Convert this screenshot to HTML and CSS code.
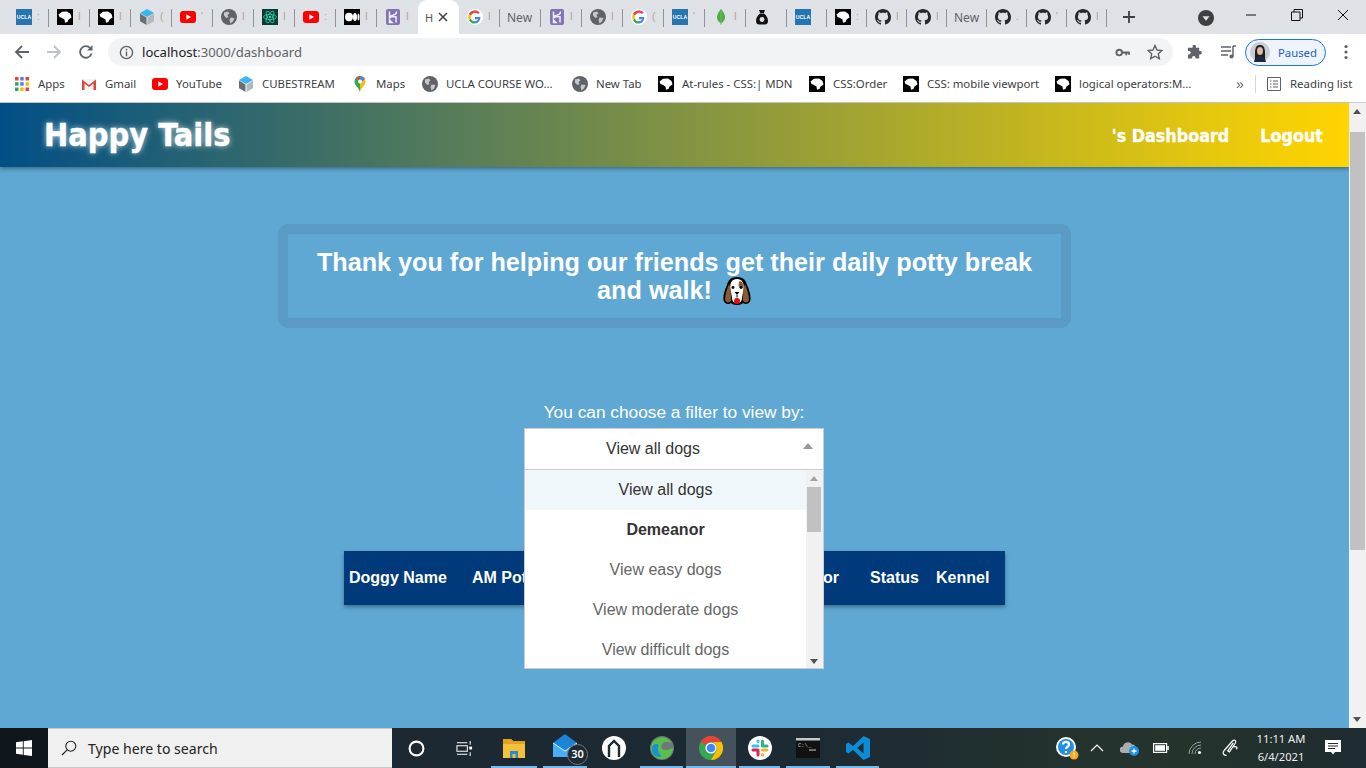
FILE: index.html
```html
<!DOCTYPE html>
<html lang="en">
<head>
<meta charset="utf-8">
<title>Happy Tails</title>
<link rel="stylesheet" href="styles.css">
</head>
<body>
<svg class="defs" aria-hidden="true">
  <symbol id="ucla" viewBox="0 0 16 16"><rect width="16" height="16" fill="#2774ae"/><text x="8" y="10" font-size="5.2" font-weight="700" fill="#fff" text-anchor="middle" font-family="Liberation Sans">UCLA</text></symbol>
  <symbol id="wolf" viewBox="0 0 16 16"><rect width="16" height="16" fill="#000"/><path d="M1.5 5.5 5 2.8 10 2.5 13.5 5 14.5 8.5 11.5 10.5 10.5 13 8 13.8 7.5 10.5 4.5 8.8 2.5 8Z" fill="#fff"/></symbol>
  <symbol id="cube" viewBox="0 0 16 16"><path d="M8 0 15 4 8 8 1 4Z" fill="#38b6f1"/><path d="M1 4.6 7.5 8.4V16L1 12.2Z" fill="#6b6f73"/><path d="M15 4.6 8.5 8.4V16L15 12.2Z" fill="#b5b9bd"/></symbol>
  <symbol id="yt" viewBox="0 0 16 16"><rect y="2" width="16" height="12" rx="3" fill="#f00"/><path d="M6.3 5.2 11 8 6.3 10.8Z" fill="#fff"/></symbol>
  <symbol id="globe" viewBox="0 0 16 16"><circle cx="8" cy="8" r="8" fill="#5f6368"/><path d="M3 3.5 7 2.5 8.5 4.5 6.5 6 7.5 8 5.5 9 3 6.5ZM9.5 8.5 13.5 9 12 12.5 9.5 14.5 8.5 11Z" fill="#c5c8cc"/></symbol>
  <symbol id="react" viewBox="0 0 16 16"><rect width="16" height="16" fill="#0b3b33"/><g fill="none" stroke="#2fd0a8" stroke-width=".8"><ellipse cx="8" cy="8" rx="6.5" ry="2.6"/><ellipse cx="8" cy="8" rx="6.5" ry="2.6" transform="rotate(60 8 8)"/><ellipse cx="8" cy="8" rx="6.5" ry="2.6" transform="rotate(120 8 8)"/></g><circle cx="8" cy="8" r="1.3" fill="#2fd0a8"/></symbol>
  <symbol id="medium" viewBox="0 0 16 16"><rect width="16" height="16" fill="#000"/><ellipse cx="5" cy="8" rx="4" ry="4.2" fill="#fff"/><ellipse cx="11" cy="8" rx="2" ry="4" fill="#fff"/><ellipse cx="14.5" cy="8" rx="1" ry="3.6" fill="#fff"/></symbol>
  <symbol id="heroku" viewBox="0 0 16 16"><rect x="1" width="14" height="16" rx="2" fill="#8473b3"/><path d="M4.5 2.5V9L7 7.5 11 7.7V13.5M11.5 2.5C11.5 5 10 5.8 8 6.2L4.5 7.5M4.5 11 7 13.5 4.5 13.5Z" fill="none" stroke="#f1edf8" stroke-width="1.5"/></symbol>
  <symbol id="google" viewBox="0 0 16 16"><circle cx="8" cy="8" r="8" fill="#fff"/><path d="M13.4 8H8v2.2h3.1a3.3 3.3 0 0 1-3.1 2.1V14.6A6.2 6.2 0 0 0 13.4 8Z" fill="#4285f4"/><path d="M8 12.3A4.3 4.3 0 0 1 3.9 9.4L1.9 11A6.6 6.6 0 0 0 8 14.6Z" fill="#34a853"/><path d="M3.9 9.4a4.3 4.3 0 0 1 0-2.8L1.9 5a6.6 6.6 0 0 0 0 6Z" fill="#fbbc05"/><path d="M3.9 6.6A4.3 4.3 0 0 1 11 5.1L12.7 3.5A6.6 6.6 0 0 0 1.9 5Z" fill="#ea4335"/></symbol>
  <symbol id="mongo" viewBox="0 0 16 16"><path d="M8 0C11 3.5 12 6 12 8.5 12 11.500 9.800 13 8.500 14L8.200 16H7.800L7.500 14C6.200 13 4 11.500 4 8.500 4 6 5 3.500 8 0Z" fill="#4faa41"/><path d="M8 2V15" stroke="#a3c89a" stroke-width=".5"/></symbol>
  <symbol id="bag" viewBox="0 0 16 16"><path d="M5 1H11L9.800 4H6.200ZM6 4.500H10C12.500 6.500 14 9 14 12 14 14.500 12.500 15.500 11 15.500H5C3.500 15.500 2 14.500 2 12 2 9 3.500 6.500 6 4.500Z" fill="#111"/><circle cx="8" cy="10.500" r="2.400" fill="#dee1e6"/></symbol>
  <symbol id="github" viewBox="0 0 16 16"><path d="M8 0C3.58 0 0 3.58 0 8c0 3.54 2.29 6.53 5.47 7.59.4.07.55-.17.55-.38 0-.19-.01-.82-.01-1.49-2.01.37-2.53-.49-2.69-.94-.09-.23-.48-.94-.82-1.13-.28-.15-.68-.52-.01-.53.63-.01 1.08.58 1.23.82.72 1.21 1.87.87 2.33.66.07-.52.28-.87.51-1.07-1.78-.2-3.64-.89-3.64-3.95 0-.87.31-1.59.82-2.15-.08-.2-.36-1.02.08-2.12 0 0 .67-.21 2.2.82.64-.18 1.32-.27 2-.27.68 0 1.36.09 2 .27 1.53-1.04 2.2-.82 2.2-.82.44 1.1.16 1.92.08 2.12.51.56.82 1.27.82 2.15 0 3.07-1.87 3.75-3.65 3.95.29.25.54.73.54 1.48 0 1.07-.01 1.93-.01 2.2 0 .21.15.46.55.38A8.013 8.013 0 0016 8c0-4.42-3.58-8-8-8z" fill="#24292e"/></symbol>
  <symbol id="apps" viewBox="0 0 16 16"><g><rect x="1" y="1" width="3.500" height="3.500" fill="#ea4335"/><rect x="6.200" y="1" width="3.500" height="3.500" fill="#4285f4"/><rect x="11.500" y="1" width="3.500" height="3.500" fill="#ea4335"/><rect x="1" y="6.200" width="3.500" height="3.500" fill="#34a853"/><rect x="6.200" y="6.200" width="3.500" height="3.500" fill="#4285f4"/><rect x="11.500" y="6.200" width="3.500" height="3.500" fill="#fbbc05"/><rect x="1" y="11.500" width="3.500" height="3.500" fill="#34a853"/><rect x="6.200" y="11.500" width="3.500" height="3.500" fill="#fbbc05"/><rect x="11.500" y="11.500" width="3.500" height="3.500" fill="#ea4335"/></g></symbol>
  <symbol id="gmail" viewBox="0 0 16 16"><path d="M1 3H15V14H1Z" fill="#f4f4f4"/><path d="M1 3.500 8 9 15 3.500V14H12.500V7.500L8 11 3.500 7.500V14H1Z" fill="#d8493c"/></symbol>
  <symbol id="maps" viewBox="0 0 16 16"><path d="M8 0A5.500 5.500 0 0 0 2.500 5.500C2.500 9.500 6.500 11 8 16Z" fill="#34a853"/><path d="M8 0A5.500 5.500 0 0 1 13.500 5.500C13.500 9.500 9.500 11 8 16Z" fill="#fbbc05"/><path d="M3.500 2.500A5.500 5.500 0 0 1 8 0V4Z" fill="#ea4335"/><path d="M8 0A5.500 5.500 0 0 1 13 3L8 7Z" fill="#4285f4"/><circle cx="8" cy="5.500" r="2" fill="#fff"/></symbol>
</svg>

<div class="tabstrip">
  <div class="tabs">
    <div class="tab"><svg class="fav"><use href="#ucla"/></svg><span class="frag">:</span></div>
    <div class="tab"><svg class="fav"><use href="#wolf"/></svg><span class="frag frag-r">I</span></div>
    <div class="tab"><svg class="fav"><use href="#wolf"/></svg><span class="frag frag-r">I</span></div>
    <div class="tab"><svg class="fav"><use href="#cube"/></svg><span class="frag">(</span></div>
    <div class="tab"><svg class="fav"><use href="#yt"/></svg><span class="frag frag-r">'</span></div>
    <div class="tab"><svg class="fav"><use href="#globe"/></svg><span class="frag frag-r">I</span></div>
    <div class="tab"><svg class="fav"><use href="#react"/></svg><span class="frag frag-r">I</span></div>
    <div class="tab"><svg class="fav"><use href="#yt"/></svg><span class="frag">:</span></div>
    <div class="tab"><svg class="fav"><use href="#medium"/></svg><span class="frag frag-r">I</span></div>
    <div class="tab tab-before"><svg class="fav"><use href="#heroku"/></svg><span class="frag frag-r">I</span></div>
    <div class="tab tab-active"><span class="active-title">H</span><svg class="tab-close" viewBox="0 0 10 10"><path d="M1 1 9 9M9 1 1 9" stroke="#3c4043" stroke-width="1.500"/></svg></div>
    <div class="tab"><svg class="fav"><use href="#google"/></svg><span class="frag">I</span></div>
    <div class="tab"><span class="tab-new">New</span></div>
    <div class="tab"><svg class="fav"><use href="#heroku"/></svg><span class="frag frag-r">I</span></div>
    <div class="tab"><svg class="fav"><use href="#globe"/></svg><span class="frag frag-r">I</span></div>
    <div class="tab"><svg class="fav"><use href="#google"/></svg><span class="frag">(</span></div>
    <div class="tab"><svg class="fav"><use href="#ucla"/></svg><span class="frag frag-r">'</span></div>
    <div class="tab"><svg class="fav"><use href="#mongo"/></svg><span class="frag frag-r">I</span></div>
    <div class="tab"><svg class="fav"><use href="#bag"/></svg></div>
    <div class="tab tab-n"><svg class="fav"><use href="#ucla"/></svg></div>
    <div class="tab tab-n"><svg class="fav"><use href="#wolf"/></svg><span class="frag">:</span></div>
    <div class="tab tab-n"><svg class="fav"><use href="#github"/></svg><span class="frag">I</span></div>
    <div class="tab tab-n"><svg class="fav"><use href="#github"/></svg><span class="frag">I</span></div>
    <div class="tab tab-n"><span class="tab-new">New</span></div>
    <div class="tab tab-n"><svg class="fav"><use href="#github"/></svg><span class="frag">.</span></div>
    <div class="tab tab-n"><svg class="fav"><use href="#github"/></svg><span class="frag frag-r">'</span></div>
    <div class="tab tab-n"><svg class="fav"><use href="#github"/></svg><span class="frag">I</span></div>
  </div>
  <svg class="newtab" viewBox="0 0 12 12"><path d="M6 0V12M0 6H12" stroke="#3c4043" stroke-width="1.800"/></svg>
  <svg class="tabsearch" viewBox="0 0 18 18"><circle cx="9" cy="9" r="9" fill="#3c4043"/><path d="M5 7H13L9 12Z" fill="#dee1e6"/></svg>
  <div class="winctl">
    <svg viewBox="0 0 12 12"><path d="M1 6H11" stroke="#111" stroke-width="1"/></svg>
    <svg viewBox="0 0 12 12"><path d="M3 3V.5H11.500V9H9M.5 3H9V11.500H.5Z" fill="none" stroke="#111" stroke-width="1"/></svg>
    <svg viewBox="0 0 12 12"><path d="M1 1 11 11M11 1 1 11" stroke="#111" stroke-width="1"/></svg>
  </div>
</div>

<div class="toolbar">
  <svg class="tb-ic" viewBox="0 0 16 16"><path d="M15 8H2M8 2 2 8 8 14" fill="none" stroke="#5f6368" stroke-width="1.800"/></svg>
  <svg class="tb-ic" viewBox="0 0 16 16"><path d="M1 8H14M8 2 14 8 8 14" fill="none" stroke="#bdc1c6" stroke-width="1.800"/></svg>
  <svg class="tb-ic" viewBox="0 0 16 16"><path d="M13.500 9.500A5.800 5.800 0 1 1 12.200 4" fill="none" stroke="#5f6368" stroke-width="1.800"/><path d="M14.500 1V6.500H9Z" fill="#5f6368"/></svg>
  <div class="omnibox">
    <svg class="omni-info" viewBox="0 0 16 16"><circle cx="8" cy="8" r="6.500" fill="none" stroke="#5f6368" stroke-width="1.500"/><path d="M8 7V12M8 4V5.800" stroke="#5f6368" stroke-width="1.500"/></svg>
    <span class="url"><span class="url-host">localhost</span>:3000/dashboard</span>
    <svg class="omni-key" viewBox="0 0 16 16"><circle cx="4.500" cy="8" r="3" fill="none" stroke="#5f6368" stroke-width="2"/><path d="M7 8H15.500M12 8V11M15 8V10.500" stroke="#5f6368" stroke-width="2"/></svg>
    <svg class="omni-star" viewBox="0 0 16 16"><path d="M8 1.500 10 6 15 6.500 11.300 9.800 12.300 14.700 8 12.200 3.700 14.700 4.700 9.800 1 6.500 6 6Z" fill="none" stroke="#5f6368" stroke-width="1.400"/></svg>
  </div>
  <svg class="tb-puzzle" viewBox="0 0 16 16"><path d="M6 1.500A1.700 1.700 0 0 1 9.500 1.500V3H13V6.500H14.500A1.800 1.800 0 0 1 14.500 10H13V14.500H9V13A1.800 1.800 0 0 0 5.500 13V14.500H1V10H2.500A1.800 1.800 0 0 0 2.500 6.500H1V3H6Z" fill="#5f6368"/></svg>
  <svg class="tb-media" viewBox="0 0 16 16"><path d="M0 3H10M0 7H10M0 11H7" stroke="#5f6368" stroke-width="1.300"/><path d="M12 2V12.500" stroke="#5f6368" stroke-width="1.500"/><path d="M12 2H15" stroke="#5f6368" stroke-width="1.500"/><circle cx="10.500" cy="12.500" r="2" fill="#5f6368"/></svg>
  <div class="profile">
    <svg class="avatar" viewBox="0 0 20 20"><circle cx="10" cy="10" r="10" fill="#c9ccd1"/><path d="M5 20C5 10 4 3 10 3 16 3 15 10 15 20Z" fill="#1f1d24"/><ellipse cx="10" cy="9" rx="3" ry="4" fill="#e0b9a2"/><path d="M4 20C5 15 8 14 10 14 12 14 15 15 16 20Z" fill="#1e2a3c"/></svg>
    <span class="profile-text">Paused</span>
  </div>
  <svg class="tb-dots" viewBox="0 0 4 16"><circle cx="2" cy="2.500" r="1.600" fill="#5f6368"/><circle cx="2" cy="8" r="1.600" fill="#5f6368"/><circle cx="2" cy="13.500" r="1.600" fill="#5f6368"/></svg>
</div>

<div class="bookmarks">
  <div class="bm-list">
    <a class="bm"><svg class="fav"><use href="#apps"/></svg>Apps</a>
    <a class="bm"><svg class="fav"><use href="#gmail"/></svg>Gmail</a>
    <a class="bm"><svg class="fav"><use href="#yt"/></svg>YouTube</a>
    <a class="bm"><svg class="fav"><use href="#cube"/></svg>CUBESTREAM</a>
    <a class="bm"><svg class="fav"><use href="#maps"/></svg>Maps</a>
    <a class="bm"><svg class="fav"><use href="#globe"/></svg>UCLA COURSE WO...</a>
    <a class="bm"><svg class="fav"><use href="#globe"/></svg>New Tab</a>
    <a class="bm"><svg class="fav"><use href="#wolf"/></svg>At-rules - CSS:| MDN</a>
    <a class="bm"><svg class="fav"><use href="#wolf"/></svg>CSS:Order</a>
    <a class="bm"><svg class="fav"><use href="#wolf"/></svg>CSS: mobile viewport</a>
    <a class="bm"><svg class="fav"><use href="#wolf"/></svg>logical operators:M...</a>
  </div>
  <span class="bm-more">»</span>
  <span class="bm-sep"></span>
  <a class="bm bm-read"><svg class="fav-read" viewBox="0 0 14 14"><path d="M.5.5H13.500V13.500H.5ZM3 4H4.500M6 4H11M3 7H4.500M6 7H11M3 10H4.500M6 10H11" fill="none" stroke="#5f6368" stroke-width="1"/></svg>Reading list</a>
</div>

<div class="viewport">
  <div class="page">
    <header class="hero">
      <h1 class="brand">Happy Tails</h1>
      <nav class="nav">
        <a class="nav-link">'s Dashboard</a>
        <a class="nav-link">Logout</a>
      </nav>
    </header>
    <section class="thanks">
      <h2 class="thanks-text">Thank you for helping our friends get their daily potty break and walk!
        <svg class="dog" viewBox="0 0 30 30"><path d="M15 1C8 1 6 5 5 9 3 13 1 19 1.500 24 2 28 7 29 9 27 10 28 12 29 15 29 18 29 20 28 21 27 23 29 28 28 28.500 24 29 19 27 13 25 9 24 5 22 1 15 1Z" fill="#000"/><path d="M7 8C5 13 3 19 3 24 4 27 7 27 9 25 9 18 9 12 7 8ZM23 8C25 13 27 19 27 24 26 27 23 27 21 25 21 18 21 12 23 8Z" fill="#8a5a33"/><path d="M15 3C10 3 7.500 7 8.500 13L10 22C10 25 12 27 15 27 18 27 20 25 20 22L21.500 13C22.500 7 20 3 15 3Z" fill="#fff"/><path d="M17 5.500C20 4.500 22 8 21 12 19.500 13 17 12 16.500 9.500Z" fill="#8a5a33"/><circle cx="11" cy="11.500" r="1.400" fill="#000"/><circle cx="19" cy="11.500" r="1.400" fill="#000"/><path d="M12.500 16H17.500L15 19Z" fill="#000"/><path d="M15 19V21.500" stroke="#000" stroke-width="1"/><circle cx="15" cy="25" r="3" fill="#e01010"/></svg>
      </h2>
    </section>
    <section class="filter">
      <label class="filter-label">You can choose a filter to view by:</label>
      <div class="select">
        <div class="select-value"><span class="select-text">View all dogs</span><span class="caret"></span></div>
        <div class="menu">
          <ul class="menu-list">
            <li class="opt opt-sel">View all dogs</li>
            <li class="opt opt-group">Demeanor</li>
            <li class="opt">View easy dogs</li>
            <li class="opt">View moderate dogs</li>
            <li class="opt">View difficult dogs</li>
          </ul>
          <div class="menu-scroll">
            <span class="arrow-up"></span>
            <span class="menu-thumb"></span>
            <span class="arrow-down"></span>
          </div>
        </div>
      </div>
    </section>
    <div class="table-wrap">
      <table class="dogs">
        <thead><tr>
          <th class="c-name">Doggy Name</th><th class="c-am">AM Potty</th><th class="c-pm">PM Potty</th><th class="c-walk">Walk</th><th class="c-beh">Behavior</th><th class="c-status">Status</th><th class="c-kennel">Kennel</th>
        </tr></thead>
      </table>
    </div>
  </div>
  <div class="scrollbar">
    <span class="arrow-up arrow-dark"></span>
    <span class="thumb"></span>
    <span class="arrow-down arrow-dark"></span>
  </div>
</div>

<footer class="taskbar">
  <div class="start"><svg viewBox="0 0 16 16" class="win"><path d="M0 2.300 6.800 1.300V7.600H0ZM7.700 1.200 16 0V7.600H7.700ZM0 8.500H6.800V14.800L0 13.800ZM7.700 8.500H16V16L7.700 14.900Z" fill="#fff"/></svg></div>
  <div class="search"><svg class="search-ic" viewBox="0 0 16 16"><circle cx="9.800" cy="6.200" r="5" fill="none" stroke="#222" stroke-width="1.100"/><path d="M6.200 9.800 1 15" stroke="#222" stroke-width="1.200"/></svg><span>Type here to search</span></div>
  <div class="apps">
    <div class="app"><svg class="ic-cortana" viewBox="0 0 16 16"><circle cx="8" cy="8" r="6.500" fill="none" stroke="#fff" stroke-width="2"/></svg></div>
    <div class="app"><svg class="ic-task" viewBox="0 0 18 18"><path d="M1 3H12M1 15H12M1 6H12V12H1ZM15 1V5M15 13V17" fill="none" stroke="#fff" stroke-width="1.100"/><rect x="14" y="7" width="3" height="3" fill="#fff"/></svg></div>
    <div class="app app-run"><svg class="ic-app" viewBox="0 0 24 24"><path d="M1 3H9L11 5H23V22H1Z" fill="#f3c13a"/><path d="M1 3H9L11 5H23V8H1Z" fill="#e3a21a"/><path d="M8 22V15H16V22H13.500V18H10.500V22Z" fill="#2a8ad4"/></svg></div>
    <div class="app app-run"><svg class="ic-mail" viewBox="0 0 24 24"><path d="M0 9 12 0 24 9V23H0Z" fill="#1b86d8"/><path d="M0 9 12 17 24 9V23H0Z" fill="#48aef5"/><path d="M0 9 12 17 24 9" fill="none" stroke="#d9effd" stroke-width="1"/></svg><span class="mail-badge">30</span></div>
    <div class="app"><svg class="ic-app" viewBox="0 0 24 24"><circle cx="12" cy="12" r="12" fill="#fff"/><path d="M7 21V10L12 5 17 10V21" fill="none" stroke="#1d2a33" stroke-width="2.400"/></svg></div>
    <div class="app app-run app-split"><svg class="ic-app" viewBox="0 0 24 24"><circle cx="12" cy="12" r="12" fill="#6d7b78"/><path d="M1 12A11 11 0 0 1 22 8C20 5 14 5 12 8 10 11 12 14 15 14 19 14 22 13 23 11 23 18 18 23 12 23 5 23 1 18 1 12Z" fill="#5bc04a"/><path d="M2 13C2 8 7 7 9 9 7 12 8 18 12 20 9 22 2 21 2 13Z" fill="#1b8fd1"/></svg></div>
    <div class="app app-run app-chrome"><svg class="ic-chrome" viewBox="0 0 24 24"><circle cx="12" cy="12" r="12" fill="#34a853"/><path d="M12 0A12 12 0 0 1 22.400 6H12A6 6 0 0 0 6.800 9L1.600 6A12 12 0 0 1 12 0Z" fill="#ea4335"/><path d="M22.400 6A12 12 0 0 1 12 24L17.200 15A6 6 0 0 0 12 6Z" fill="#fbbc05"/><path d="M1.600 6 6.800 15A6 6 0 0 0 12 18L6 21" fill="#34a853"/><circle cx="12" cy="12" r="5.600" fill="#fff"/><circle cx="12" cy="12" r="4.300" fill="#4285f4"/></svg></div>
    <div class="app app-run"><svg class="ic-app" viewBox="0 0 24 24"><circle cx="12" cy="12" r="12" fill="#fff"/><g stroke-width="3" stroke-linecap="round"><path d="M10 5V5.500M10 10H5" stroke="#36c5f0"/><path d="M19 10H14.500M14.500 10V5" stroke="#2eb67d"/><path d="M14.500 14H19M14.500 19V18.500" stroke="#ecb22e"/><path d="M5 14H10M10 14V19" stroke="#e01e5a"/></g></svg></div>
    <div class="app app-run app-split"><svg class="ic-cmd" viewBox="0 0 24 20"><rect width="24" height="20" fill="#111"/><rect width="24" height="2.500" fill="#c5c9cc"/><text x="2" y="9" font-size="5.500" fill="#ccc" font-family="Liberation Mono">C:\_</text><path d="M13 12H20" stroke="#ccc" stroke-width="1"/></svg></div>
    <div class="app app-run app-split"><svg class="ic-app" viewBox="0 0 24 24"><path d="M17.500 0 24 3V21L17.500 24 7 14 2.500 17.500 0 16V8L2.500 6.500 7 10ZM17.500 6.500 11.300 12 17.500 17.500Z" fill="#0e8bd6"/></svg></div>
  </div>
  <div class="tray">
    <div class="tr"><svg class="ic-help" viewBox="0 0 24 24"><circle cx="11" cy="11" r="10" fill="#fff"/><circle cx="11" cy="11" r="8" fill="#1f8fe0"/><path d="M8 8.500C8 5 14 5 14 8.500 14 11 11 10.500 11 13M11 15V17" fill="none" stroke="#fff" stroke-width="2.200"/><circle cx="19" cy="19" r="4.500" fill="#f5a81c"/><path d="M19 16.500V19.500M19 20.500V21.500" stroke="#fff" stroke-width="1.200"/></svg></div>
    <div class="tr"><svg class="ic-small" viewBox="0 0 14 14"><path d="M1 10 7 4 13 10" fill="none" stroke="#fff" stroke-width="1.200"/></svg></div>
    <div class="tr"><svg class="ic-cloud" viewBox="0 0 20 16"><path d="M3 13A3 3 0 0 1 3 6.500 5 5 0 0 1 12 4.500 4 4 0 0 1 16 9V13Z" fill="#a9adb0"/><circle cx="14" cy="11" r="5" fill="#1e8fe6"/><path d="M11.500 11H16.500M14 8.500V13.500" stroke="#fff" stroke-width="1.300"/></svg></div>
    <div class="tr"><svg class="ic-batt" viewBox="0 0 16 10"><rect x=".6" y=".6" width="13" height="8.800" fill="none" stroke="#fff" stroke-width="1.200"/><rect x="2.200" y="2.200" width="9.800" height="5.600" fill="#fff"/><rect x="14.200" y="3" width="1.600" height="4" fill="#fff"/></svg></div>
    <div class="tr"><svg class="ic-wifi" viewBox="0 0 14 14"><g fill="none" stroke="#9aa0a3" stroke-width="1"><path d="M1 13A12 12 0 0 1 13 1"/><path d="M4 13A9 9 0 0 1 13 4"/><path d="M7 13A6 6 0 0 1 13 7"/></g><circle cx="11.500" cy="11.500" r="1.600" fill="#fff"/></svg></div>
    <div class="tr"><svg class="ic-pen" viewBox="0 0 16 16"><path d="M5 14.500C2 15 1 12 3 10L10 2C12 0 14 1.500 12.500 4L7.500 11.500 6 10.500 11 3.500M11 7C14 6 15 8 13.500 9" fill="none" stroke="#fff" stroke-width="1.100"/></svg></div>
    <div class="clock"><span>11:11 AM</span><span>6/4/2021</span></div>
    <div class="tr"><svg class="ic-note" viewBox="0 0 16 16"><path d="M0 0H16V12H10L8 14.500 6 12H0Z" fill="#fff"/><path d="M3 3.500H13M3 6H13M3 8.500H10" stroke="#1f2d2d" stroke-width="1"/></svg></div>
  </div>
</footer>
</body>
</html>
```

FILE: styles.css
```css
* { box-sizing: border-box; }
html, body { margin: 0; padding: 0; width: 1366px; height: 768px; overflow: hidden; }
body { font-family: "Liberation Sans", Arial, sans-serif; display: flex; flex-direction: column; background: #5fa8d3; }
.defs { position: absolute; width: 0; height: 0; }
.fav { width: 16px; height: 16px; flex: none; }

/* tab strip */
.tabstrip { height: 34px; background: #dee1e6; display: flex; align-items: center; flex: none; position: relative; }
.tabs { display: flex; height: 34px; padding-left: 8px; flex: none; }
.tab { width: 41px; height: 34px; display: flex; align-items: center; padding-left: 8px; gap: 5px; position: relative; flex: none; }
.tab-n { width: 40px; }
.tab::after { content: ""; position: absolute; right: 0; top: 9px; width: 1px; height: 18px; background: #8f9499; }
.tab-before::after { display: none; }
.tab-active { background: #fff; border-radius: 9px 9px 0 0; padding-left: 7px; justify-content: space-between; padding-right: 11px; }
.tab-active::after { display: none; }
.active-title { font-size: 11px; color: #555; font-family: "Noto Sans", sans-serif; }
.tab-close { width: 10px; height: 10px; flex: none; }
.frag { font-size: 10px; color: #b3a58a; width: 4px; line-height: 12px; }
.frag-r { color: #c49a90; }
.tab-new { font-size: 12px; color: #5f6368; font-family: "Noto Sans", sans-serif; margin-left: -1px; }
.newtab { width: 12px; height: 12px; margin-left: 16px; flex: none; }
.tabsearch { width: 16px; height: 16px; margin-left: 63px; flex: none; margin-top: 1px; }
.winctl { margin-left: auto; display: flex; flex: none; }
.winctl svg { width: 46px; height: 12px; padding: 0 17px; margin-bottom: 5px; }

/* toolbar */
.toolbar { height: 36px; background: #fff; display: flex; align-items: center; flex: none; padding-left: 14px; }
.tb-ic { width: 16px; height: 16px; margin-right: 16px; flex: none; }
.tb-ic:nth-child(3) { margin-right: 14px; }
.omnibox { width: 1065px; height: 28px; border-radius: 14px; background: #f1f3f4; display: flex; align-items: center; padding-left: 11px; flex: none; }
.omni-info { width: 15px; height: 15px; flex: none; }
.url { font-family: "Noto Sans", sans-serif; font-size: 13.1px; color: #5f6368; margin-left: 8px; }
.url-host { color: #202124; }
.omni-key { width: 15px; height: 15px; margin-left: auto; flex: none; }
.omni-star { width: 16px; height: 16px; margin: 0 10px 0 17px; flex: none; }
.tb-puzzle { width: 15px; height: 15px; margin-left: 14px; flex: none; }
.tb-media { width: 16px; height: 16px; margin-left: 19px; flex: none; }
.profile { width: 81px; height: 27px; margin-left: 8px; border: 1px solid #1a73e8; border-radius: 14px; background: #eef3fc; display: flex; align-items: center; padding-left: 4px; flex: none; }
.avatar { width: 20px; height: 20px; flex: none; }
.profile-text { font-family: "Noto Sans", sans-serif; font-size: 11.3px; color: #1a5fc8; margin-left: 8px; }
.tb-dots { width: 4px; height: 16px; margin-left: 18px; flex: none; }

/* bookmarks */
.bookmarks { height: 33px; background: #fff; border-bottom: 1px solid #ccc; display: flex; align-items: center; flex: none; padding: 0 0 5px 14px; }
.bm-list { display: grid; grid-template-columns: 67px 71px 86px 114px 70px 150px 86px 151px 94px 152px 130px; width: 1171px; flex: none; }
.bm { display: flex; align-items: center; gap: 8px; font-family: "Noto Sans", sans-serif; font-size: 11.4px; color: #3c4043; white-space: nowrap; }
.bm-more { font-size: 14px; color: #5f6368; margin-left: 51px; width: 18px; }
.bm-sep { width: 1px; height: 18px; background: #d5d7da; margin-left: 1px; }
.bm-read { margin-left: 11px; gap: 9px; }
.fav-read { width: 14px; height: 14px; flex: none; }

/* page */
.viewport { height: 625px; display: flex; flex: none; }
.page { flex: 1; position: relative; display: flex; flex-direction: column; align-items: center; }
.hero { width: 100%; height: 64px; flex: none; background: linear-gradient(90deg, #014f86, #ffd500); box-shadow: 0 2px 4px rgba(0,0,0,.35); display: flex; align-items: center; justify-content: space-between; padding: 0 26px 0 44px; color: #fff; font-family: "DejaVu Sans Condensed", "DejaVu Sans", sans-serif; }
.brand { margin: 0; font-size: 32.2px; font-weight: 700; text-shadow: 0 0 6px rgba(255,255,255,.75); -webkit-text-stroke: .4px #fff; }
.nav { display: flex; gap: 31px; }
.nav-link { font-size: 17.8px; font-weight: 700; -webkit-text-stroke: .3px #fff; }
.thanks { margin-top: 57px; width: 793px; height: 104px; border: 10px solid #5a9ac4; border-radius: 10px; padding: 15px 20px; flex: none; }
.thanks-text { margin: 0; font-size: 25.2px; line-height: 27px; font-weight: 700; color: #fff; text-align: center; }
.dog { width: 30px; height: 30px; vertical-align: -7px; margin-left: 3px; }
.filter { margin: 74px 1px 0 0; width: 300px; display: flex; flex-direction: column; align-items: center; flex: none; }
.filter-label { font-size: 17.3px; line-height: 20px; color: #fff; white-space: nowrap; }
.select { width: 300px; height: 42px; margin-top: 6px; position: relative; background: #fff; border: 1px solid #ccc; }
.select-value { height: 40px; display: flex; align-items: center; justify-content: center; font-size: 16px; color: #333; padding-right: 42px; }
.caret { position: absolute; right: 10px; top: 14px; border: 5px solid transparent; border-top: 0; border-bottom: 6px solid #999; }
.menu { position: absolute; left: -1px; top: 40px; width: 300px; height: 200px; background: #fff; border: 1px solid #ccc; display: flex; z-index: 5; }
.menu-list { list-style: none; margin: 0; padding: 0; flex: 1; }
.opt { height: 40px; display: flex; align-items: center; justify-content: center; font-size: 16px; color: #666; }
.opt-sel { background: #f0f7fb; color: #333; }
.opt-group { font-weight: 700; color: #333; }
.menu-scroll { width: 17px; background: #f1f1f1; position: relative; flex: none; }
.menu-thumb { position: absolute; left: 1px; top: 17px; width: 14px; height: 45px; background: #c1c1c1; }
.arrow-up, .arrow-down { position: absolute; left: 4px; border: 4px solid transparent; }
.arrow-up { top: 6px; border-top: 0; border-bottom: 5px solid #a3a3a3; }
.arrow-down { bottom: 4px; border-bottom: 0; border-top: 5px solid #505050; }
.table-wrap { margin-top: 81px; flex: none; box-shadow: 0 2px 4px rgba(0,0,0,.35); }
.dogs { width: 661px; height: 54px; background: #003a7b; border-collapse: collapse; color: #fff; table-layout: fixed; }
.dogs th { font-size: 16px; font-weight: 700; text-align: left; padding: 0; white-space: nowrap; }
.dogs .c-name { width: 128px; padding-left: 5px; }
.dogs .c-am { width: 90px; }
.dogs .c-pm { width: 90px; }
.dogs .c-walk { width: 70px; }
.dogs .c-beh { width: 148px; text-align: right; padding-right: 31px; }
.dogs .c-status { width: 66px; }
.dogs .c-kennel { width: 69px; }

/* page scrollbar */
.scrollbar { width: 17px; background: #f1f1f1; position: relative; flex: none; }
.thumb { position: absolute; left: 1px; top: 29px; width: 15px; height: 418px; background: #c1c1c1; }
.arrow-dark.arrow-up { border-bottom-color: #505050; top: 6px; }
.arrow-dark.arrow-down { border-top-color: #505050; bottom: 6px; }

/* taskbar */
.taskbar { height: 40px; flex: none; display: flex; background: linear-gradient(90deg, #1c2832 0%, #1c2a33 60%, #25352c 85%, #1e2b30 100%); color: #fff; }
.start { width: 48px; background: #10171c; display: flex; align-items: center; justify-content: center; flex: none; }
.win { width: 16px; height: 16px; }
.search { width: 344px; background: #f0f0f0; border-top: 1px solid #c9c9c9; border-bottom: 1px solid #c9c9c9; display: flex; align-items: center; padding-left: 13px; gap: 11px; color: #222; font-family: "Noto Sans", sans-serif; font-size: 14.1px; flex: none; }
.search-ic { width: 16px; height: 16px; flex: none; }
.apps { display: grid; grid-template-columns: 48px 48px 52px 50px 47px 49px 50px 47px 50px 49px; flex: none; }
.app { position: relative; display: flex; align-items: center; justify-content: center; }
.app-run::after { content: ""; position: absolute; left: 3px; right: 3px; bottom: 0; height: 2px; background: #76b9ed; }
.app-chrome { background: #44525b; }
.app-chrome::after { left: 0; right: 0; }
.ic-app { width: 24px; height: 24px; }
.ic-chrome { width: 24px; height: 24px; }
.ic-mail { width: 24px; height: 24px; margin-top: -4px; }
.mail-badge { position: absolute; left: 27px; top: 16px; width: 21px; height: 21px; border-radius: 50%; border: 1px solid #777; background: #1c2a33; font-family: "Noto Sans", sans-serif; font-size: 11px; font-weight: 600; text-align: center; line-height: 18px; }
.ic-cortana { width: 17px; height: 17px; }
.ic-task { width: 17px; height: 17px; }
.ic-cmd { width: 24px; height: 20px; }
.tray { margin-left: 168px; display: grid; grid-template-columns: 34px 26px 40px 22px 46px 24px 78px 26px; flex: none; }
.tr { display: flex; align-items: center; justify-content: center; }
.ic-help { width: 24px; height: 24px; }
.ic-small { width: 14px; height: 14px; }
.ic-cloud { width: 20px; height: 16px; }
.ic-batt { width: 16px; height: 10px; }
.ic-wifi { width: 14px; height: 14px; }
.ic-pen { width: 18px; height: 18px; }
.ic-note { width: 16px; height: 16px; }
.clock { display: flex; flex-direction: column; align-items: center; justify-content: center; font-family: "Noto Sans", sans-serif; font-size: 11.2px; line-height: 18px; color: #eee; }
```
